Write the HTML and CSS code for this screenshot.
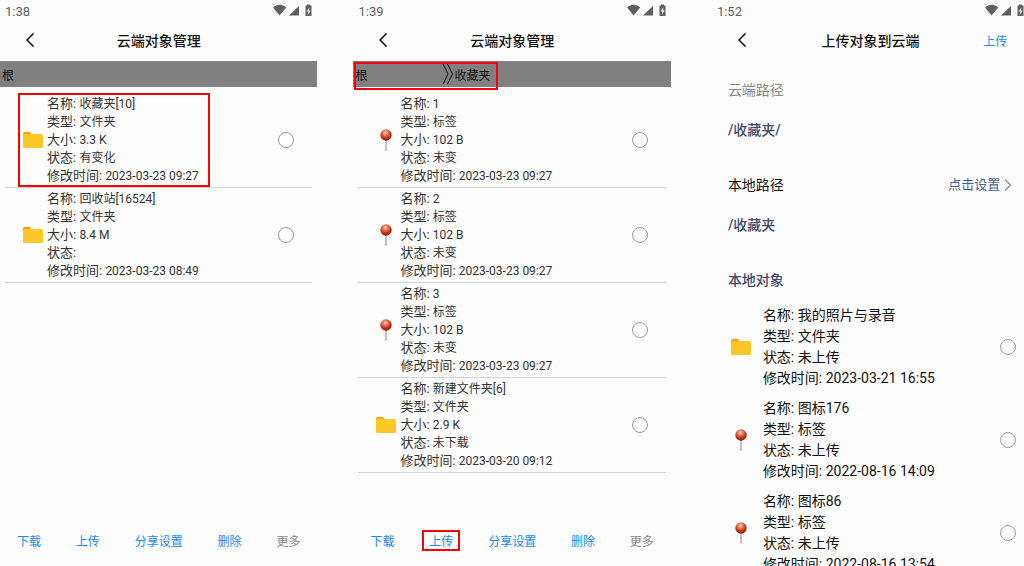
FILE: index.html
```html
<!DOCTYPE html>
<html lang="zh-CN">
<head>
    <meta charset="UTF-8">
    <meta name="viewport" content="width=device-width, initial-scale=1">
    <title>云端对象管理</title>
    <link rel="stylesheet" href="styles.css">
</head>
<body>
    <svg class="sprite" aria-hidden="true">
        <defs>
            <radialGradient id="pin-head" cx="0.45" cy="0.3" r="0.7">
                <stop offset="0" stop-color="#ffd9c8"/>
                <stop offset="0.3" stop-color="#e8805f"/>
                <stop offset="0.65" stop-color="#c93414"/>
                <stop offset="1" stop-color="#8a1a05"/>
            </radialGradient>
        </defs>
        <symbol id="icon-status" viewBox="0 0 42 14">
            <path fill="#5f5f5f" d="M1 3.600C5-.1 10.200-.1 14.200 3.600L7.600 11.500z"/>
            <path fill="#5f5f5f" d="M27 2v9.500H17z"/>
            <path fill="#5f5f5f" fill-rule="evenodd" d="M35 1.500V.5h3v1h1.500v10.500h-6v-10.500zM37.200 3.200l-2.500 4.200h1.500v3.400l2.400-4.400h-1.400z"/>
        </symbol>
        <symbol id="icon-back" viewBox="0 0 10 16">
            <path fill="none" stroke="#111" stroke-width="1.500" d="M8.500 1.500L2 8l6.500 6.500"/>
        </symbol>
        <symbol id="icon-next" viewBox="0 0 8 14">
            <path fill="none" stroke="#888" stroke-width="1.200" d="M1 1.500L6.500 7 1 12.500"/>
        </symbol>
        <symbol id="icon-crumb" viewBox="0 0 12 22">
            <path fill="none" stroke="#111" stroke-width="1" d="M1 1l5 10-5 10M5.500 1l5 10-5 10"/>
        </symbol>
        <symbol id="icon-folder" viewBox="0 0 20 16">
            <path fill="#ff9f0a" d="M1.500 0h5.300l1.700 2v4H0V1.500Q0 0 1.500 0z"/>
            <path fill="#ffc828" d="M0 3.500Q0 2 1.500 2h17Q20 2 20 3.500v11q0 1.500-1.500 1.500h-17Q0 16 0 14.500z"/>
        </symbol>
        <symbol id="icon-pin" viewBox="0 0 12 22">
            <path stroke="#888" stroke-width="1" d="M6 10v11"/>
            <path stroke="#bbb" stroke-width="1" d="M4.500 21h3"/>
            <circle cx="6" cy="6" r="5.700" fill="url(#pin-head)"/>
        </symbol>
    </svg>

    <div class="page">
        <section class="screen">
            <div class="status">
                <span>1:38</span>
                <svg class="status-icons" aria-hidden="true"><use href="#icon-status"/></svg>
            </div>
            <header class="header">
                <button class="back" type="button" aria-label="返回"><svg><use href="#icon-back"/></svg></button>
                <h1>云端对象管理</h1>
            </header>
            <nav class="crumbs"><a href="#">根</a></nav>
            <div class="list">
                <label class="item marked">
                    <span class="icon"><svg class="folder"><use href="#icon-folder"/></svg></span>
                    <span class="info">
                        <span class="row">名称: <span class="value">收藏夹[10]</span></span>
                        <span class="row">类型: <span class="value">文件夹</span></span>
                        <span class="row">大小: <span class="value">3.3 K</span></span>
                        <span class="row">状态: <span class="value">有变化</span></span>
                        <span class="row">修改时间: <span class="value">2023-03-23 09:27</span></span>
                    </span>
                    <input type="radio" name="root">
                </label>
                <label class="item">
                    <span class="icon"><svg class="folder"><use href="#icon-folder"/></svg></span>
                    <span class="info">
                        <span class="row">名称: <span class="value">回收站[16524]</span></span>
                        <span class="row">类型: <span class="value">文件夹</span></span>
                        <span class="row">大小: <span class="value">8.4 M</span></span>
                        <span class="row">状态:</span>
                        <span class="row">修改时间: <span class="value">2023-03-23 08:49</span></span>
                    </span>
                    <input type="radio" name="root">
                </label>
            </div>
            <footer class="toolbar">
                <button type="button">下载</button>
                <button type="button">上传</button>
                <button type="button">分享设置</button>
                <button type="button">删除</button>
                <button type="button" class="more">更多</button>
            </footer>
        </section>

        <section class="screen">
            <div class="status">
                <span>1:39</span>
                <svg class="status-icons" aria-hidden="true"><use href="#icon-status"/></svg>
            </div>
            <header class="header">
                <button class="back" type="button" aria-label="返回"><svg><use href="#icon-back"/></svg></button>
                <h1>云端对象管理</h1>
            </header>
            <nav class="crumbs marked">
                <a href="#" class="parent">根</a>
                <svg class="crumb-sep" aria-hidden="true"><use href="#icon-crumb"/></svg>
                <a href="#">收藏夹</a>
            </nav>
            <div class="list">
                <label class="item">
                    <span class="icon"><svg class="pin"><use href="#icon-pin"/></svg></span>
                    <span class="info">
                        <span class="row">名称: <span class="value">1</span></span>
                        <span class="row">类型: <span class="value">标签</span></span>
                        <span class="row">大小: <span class="value">102 B</span></span>
                        <span class="row">状态: <span class="value">未变</span></span>
                        <span class="row">修改时间: <span class="value">2023-03-23 09:27</span></span>
                    </span>
                    <input type="radio" name="favorites">
                </label>
                <label class="item">
                    <span class="icon"><svg class="pin"><use href="#icon-pin"/></svg></span>
                    <span class="info">
                        <span class="row">名称: <span class="value">2</span></span>
                        <span class="row">类型: <span class="value">标签</span></span>
                        <span class="row">大小: <span class="value">102 B</span></span>
                        <span class="row">状态: <span class="value">未变</span></span>
                        <span class="row">修改时间: <span class="value">2023-03-23 09:27</span></span>
                    </span>
                    <input type="radio" name="favorites">
                </label>
                <label class="item">
                    <span class="icon"><svg class="pin"><use href="#icon-pin"/></svg></span>
                    <span class="info">
                        <span class="row">名称: <span class="value">3</span></span>
                        <span class="row">类型: <span class="value">标签</span></span>
                        <span class="row">大小: <span class="value">102 B</span></span>
                        <span class="row">状态: <span class="value">未变</span></span>
                        <span class="row">修改时间: <span class="value">2023-03-23 09:27</span></span>
                    </span>
                    <input type="radio" name="favorites">
                </label>
                <label class="item">
                    <span class="icon"><svg class="folder"><use href="#icon-folder"/></svg></span>
                    <span class="info">
                        <span class="row">名称: <span class="value">新建文件夹[6]</span></span>
                        <span class="row">类型: <span class="value">文件夹</span></span>
                        <span class="row">大小: <span class="value">2.9 K</span></span>
                        <span class="row">状态: <span class="value">未下载</span></span>
                        <span class="row">修改时间: <span class="value">2023-03-20 09:12</span></span>
                    </span>
                    <input type="radio" name="favorites">
                </label>
            </div>
            <footer class="toolbar">
                <button type="button">下载</button>
                <button type="button" class="marked">上传</button>
                <button type="button">分享设置</button>
                <button type="button">删除</button>
                <button type="button" class="more">更多</button>
            </footer>
        </section>

        <section class="screen upload">
            <div class="status">
                <span>1:52</span>
                <svg class="status-icons" aria-hidden="true"><use href="#icon-status"/></svg>
            </div>
            <header class="header">
                <button class="back" type="button" aria-label="返回"><svg><use href="#icon-back"/></svg></button>
                <h1>上传对象到云端</h1>
                <button class="submit" type="button">上传</button>
            </header>
            <div class="paths">
                <div class="path-label muted">云端路径</div>
                <div class="path">/收藏夹/</div>
                <div class="path-label">
                    <span>本地路径</span>
                    <a href="#" class="setting">点击设置 <svg aria-hidden="true"><use href="#icon-next"/></svg></a>
                </div>
                <div class="path">/收藏夹</div>
                <h2>本地对象</h2>
            </div>
            <div class="objects">
                <label class="item">
                    <span class="icon"><svg class="folder"><use href="#icon-folder"/></svg></span>
                    <span class="info">
                        <span class="row">名称: 我的照片与录音</span>
                        <span class="row">类型: 文件夹</span>
                        <span class="row">状态: 未上传</span>
                        <span class="row">修改时间: 2023-03-21 16:55</span>
                    </span>
                    <input type="radio" name="local">
                </label>
                <label class="item">
                    <span class="icon"><svg class="pin"><use href="#icon-pin"/></svg></span>
                    <span class="info">
                        <span class="row">名称: 图标176</span>
                        <span class="row">类型: 标签</span>
                        <span class="row">状态: 未上传</span>
                        <span class="row">修改时间: 2022-08-16 14:09</span>
                    </span>
                    <input type="radio" name="local">
                </label>
                <label class="item">
                    <span class="icon"><svg class="pin"><use href="#icon-pin"/></svg></span>
                    <span class="info">
                        <span class="row">名称: 图标86</span>
                        <span class="row">类型: 标签</span>
                        <span class="row">状态: 未上传</span>
                        <span class="row">修改时间: 2022-08-16 13:54</span>
                    </span>
                    <input type="radio" name="local">
                </label>
            </div>
        </section>
    </div>
</body>
</html>
```
FILE: styles.css
```css
* {
    box-sizing: border-box;
}

body {
    margin: 0;
    background-color: #fdfdfd;
    color: #333;
    font-family: Roboto, "Noto Sans CJK SC", sans-serif;
    font-size: 13px;
}

a {
    color: inherit;
    text-decoration: none;
}

button {
    padding: 0;
    border: none;
    background: none;
    color: #1989fa;
    font-family: inherit;
    font-size: 12px;
    cursor: pointer;
}

.sprite {
    position: absolute;
    width: 0;
    height: 0;
}

.page {
    display: flex;
    gap: 36px;
    height: 100vh;
    overflow: hidden;
}

.screen {
    display: flex;
    flex: 0 0 31%;
    flex-direction: column;
    min-width: 0;
}

.upload {
    margin-left: 5px;
    color: #111;
}

/* Status bar and title */
.status {
    display: flex;
    justify-content: space-between;
    align-items: center;
    flex: none;
    height: 22px;
    padding: 0 3px 0 5px;
    color: #5f5f5f;
}

.status-icons {
    width: 42px;
    height: 14px;
}

.header {
    display: grid;
    grid-template-columns: 1fr auto 1fr;
    align-items: center;
    flex: none;
    height: 39px;
    padding: 0 22px 3px;
}

.header h1 {
    margin: 0;
    color: #111;
    font-size: 14px;
    font-weight: 500;
}

.back {
    justify-self: start;
    width: 16px;
    height: 16px;
}

.back svg {
    display: block;
    width: 10px;
    height: 16px;
    margin: 0 auto;
}

.submit {
    justify-self: end;
}

.crumbs {
    display: flex;
    align-items: center;
    flex: none;
    height: 26px;
    padding: 0 2px;
    background-color: #808080;
    color: #111;
    font-size: 12px;
}

.parent {
    width: 87px;
}

.crumb-sep {
    width: 12px;
    height: 22px;
}

/* Object list */
.list {
    flex: 1;
    min-height: 0;
    padding: 6px 5px 0;
}

.item {
    display: flex;
    align-items: center;
}

.list .item {
    padding: 2px 18px 2px 16px;
    border-bottom: 1px solid #d3d3d3;
}

.icon {
    display: flex;
    justify-content: center;
    flex: none;
    width: 24px;
}

.folder {
    width: 20px;
    height: 16px;
}

.pin {
    width: 12px;
    height: 22px;
}

.info {
    flex: 1;
    padding-left: 2px;
}

.row {
    display: block;
    height: 18px;
    line-height: 18px;
    white-space: nowrap;
}

.value {
    font-size: 12px;
}

input[type="radio"] {
    appearance: none;
    width: 16px;
    height: 16px;
    margin: 0;
    border: 1px solid #999;
    border-radius: 50%;
    background-color: #fff;
}

input[type="radio"]:checked {
    border-color: #1989fa;
    background-color: #1989fa;
}

.toolbar {
    display: flex;
    justify-content: space-between;
    align-items: center;
    flex: none;
    height: 52px;
    padding: 0 17px;
}

.toolbar .more {
    color: #888;
}

/* Red frames around the steps to follow */
.marked {
    position: relative;
}

.marked::after {
    content: "";
    position: absolute;
    border: 2px solid #f00;
    pointer-events: none;
}

.item.marked::after {
    top: 0;
    bottom: 0;
    left: 13px;
    width: 192px;
    box-sizing: border-box;
}

.crumbs.marked::after {
    top: 1px;
    bottom: -3px;
    left: 1px;
    width: 144px;
    box-sizing: border-box;
}

.toolbar .marked::after {
    inset: -2px -7px;
}

/* Upload page */
.paths {
    flex: none;
    padding: 9px 17px 0 16px;
    font-size: 14px;
    line-height: 40px;
}

.path-label {
    display: flex;
    justify-content: space-between;
}

.muted {
    color: #888;
}

.path {
    margin-bottom: 15px;
    color: #3f4a68;
    font-weight: 500;
}

.setting {
    display: flex;
    align-items: center;
    gap: 4px;
    color: #47608f;
    font-size: 13px;
}

.setting svg {
    width: 8px;
    height: 14px;
}

.paths h2 {
    margin: 0;
    color: #3f4a68;
    font-size: 14px;
    font-weight: 500;
}

.objects {
    padding: 5px 13px 0 17px;
    font-size: 14px;
}

.objects .item {
    margin-bottom: 9px;
}

.objects .info {
    padding-left: 10px;
}

.objects .row {
    height: 21px;
    line-height: 21px;
}
```
